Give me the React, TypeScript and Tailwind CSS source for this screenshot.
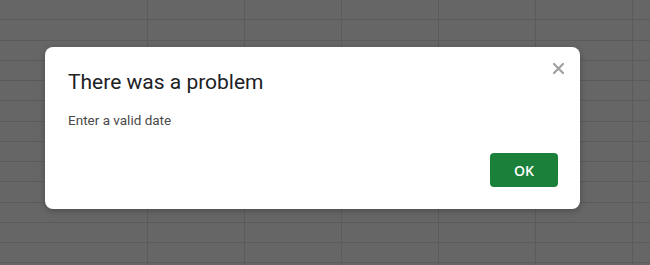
import React from "react";

const cols = [148, 97, 97, 97, 97, 97, 97];
const rows = Array.from({ length: 14 });

export default function App() {
  return (
    <div className="relative w-[650px] h-[265px] overflow-hidden bg-[#666666]">
      <div className="flex flex-col">
        {rows.map((_, r) => (
          <div key={r} className="flex h-[20.25px] shrink-0 border-b border-[#5b5b5b]">
            {cols.map((w, c) => (
              <div
                key={c}
                style={{ width: w }}
                className="shrink-0 border-r border-[#5b5b5b]"
              />
            ))}
          </div>
        ))}
      </div>
      <div className="absolute left-[45px] top-[47px] w-[535px] h-[162px] bg-white rounded-[8px] shadow-[0_2px_6px_rgba(0,0,0,0.25)]">
        <div className="flex flex-col h-full pl-[23px] pr-[22px] pt-[22px] pb-[22px]">
          <div className="flex justify-between">
            <div className="text-[21px] leading-[27px] text-[#202124] font-['Roboto',sans-serif]">
              There was a problem
            </div>
            <svg width="11" height="11" viewBox="0 0 11 11" className="mt-[-6px] mr-[-6px]">
              <path d="M1 1 L10 10 M10 1 L1 10" stroke="#a0a0a0" strokeWidth="2.2" strokeLinecap="square" />
            </svg>
          </div>
          <div className="mt-[15px] text-[13.5px] leading-[18px] text-[#4a4a4a] font-['Roboto',sans-serif]">
            Enter a valid date
          </div>
          <div className="flex-1" />
          <div className="flex justify-end">
            <button className="w-[68px] h-[34px] rounded-[4px] bg-[#1b813a] text-white text-[14px] font-semibold font-['Open_Sans',sans-serif]">
              OK
            </button>
          </div>
        </div>
      </div>
    </div>
  );
}
